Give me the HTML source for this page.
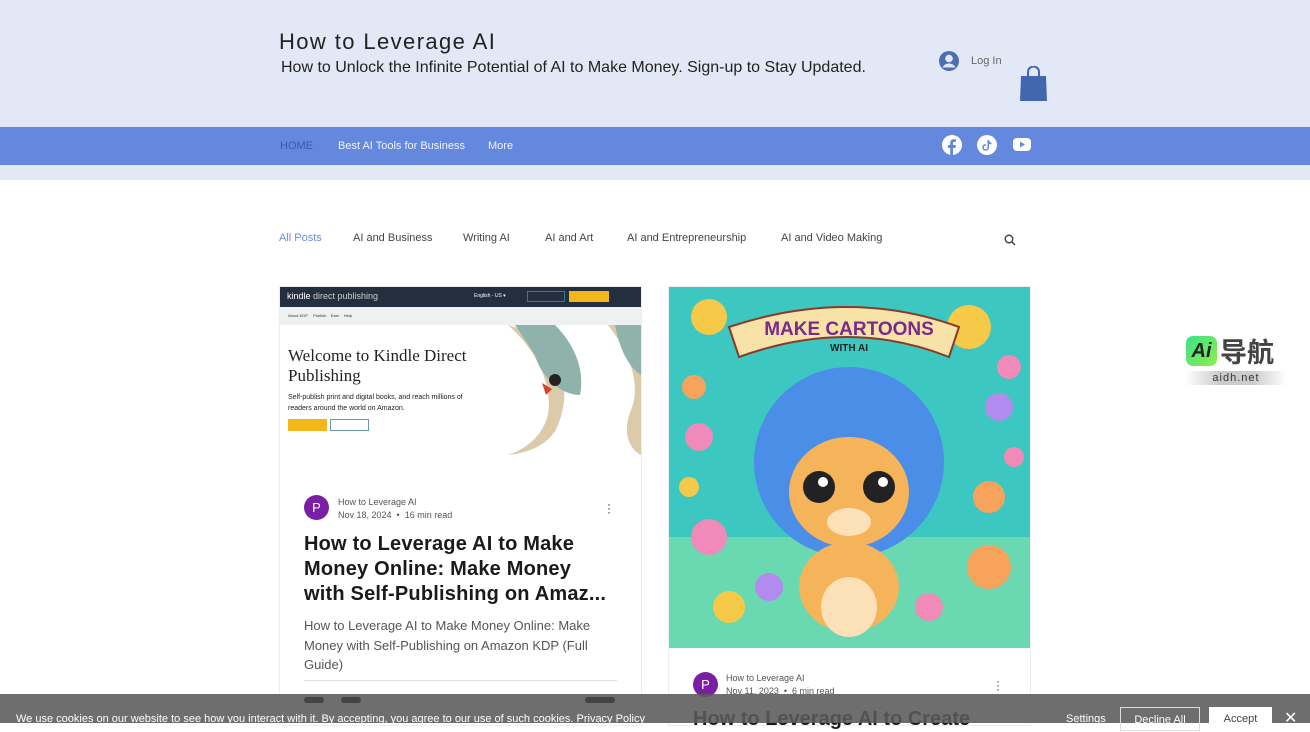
<!DOCTYPE html>
<html><head><meta charset="utf-8"><style>
*{margin:0;padding:0;box-sizing:border-box}
body{width:1310px;height:723px;overflow:hidden;background:#fff;font-family:"Liberation Sans",sans-serif;position:relative;color:#222}
.hdr{position:absolute;left:0;top:0;width:1310px;height:180px;background:#e3e8f7}
.nav{position:absolute;left:0;top:127px;width:1310px;height:38px;background:#6488de}
.abs{position:absolute;white-space:nowrap}
.card{position:absolute;border:1px solid #eee;background:#fff}
</style></head><body>
<div class="hdr"></div>
<div class="abs" style="left:279px;top:29px;font-size:22px;letter-spacing:1.4px;color:#222">How to Leverage AI</div>
<div class="abs" style="left:281px;top:59px;font-size:16px;color:#222">How to Unlock the Infinite Potential of AI to Make Money. Sign-up to Stay Updated.</div>
<svg class="abs" style="left:938px;top:50px" width="22" height="22" viewBox="0 0 22 22"><circle cx="11" cy="11" r="10" fill="#4e6db5"/><circle cx="11" cy="8.5" r="3.8" fill="#e3e8f7"/><path d="M4.5 17.5c1.5-3 4-4 6.5-4s5 1 6.5 4" fill="#e3e8f7"/></svg>
<div class="abs" style="left:971px;top:55px;font-size:11px;color:#666">Log In</div>
<svg class="abs" style="left:1019px;top:66px" width="29" height="35" viewBox="0 0 29 35"><path d="M9 10V6a5.5 5.5 0 0 1 11 0v4" fill="none" stroke="#4466b0" stroke-width="2"/><path d="M2 10h25l1 25H1z" fill="#4466b0"/></svg>
<div class="nav"></div>
<div class="abs" style="left:280px;top:140px;font-size:11px;color:#3c5aa5">HOME</div>
<div class="abs" style="left:338px;top:140px;font-size:11px;color:#f0f3fb">Best AI Tools for Business</div>
<div class="abs" style="left:488px;top:140px;font-size:11px;color:#f0f3fb">More</div>
<svg class="abs" style="left:942px;top:135px" width="20" height="20" viewBox="0 0 20 20"><circle cx="10" cy="10" r="10" fill="#fff"/><path d="M11 20v-7h2.5l.4-3H11V8.3c0-.8.3-1.4 1.4-1.4H14V4.3c-.3 0-1.2-.1-2.2-.1-2.2 0-3.6 1.3-3.6 3.7V10H6v3h2.2v7z" fill="#6488de"/></svg>
<svg class="abs" style="left:977px;top:135px" width="20" height="20" viewBox="0 0 20 20"><circle cx="10" cy="10" r="10" fill="#fff"/><path d="M10.5 5v7.5a1.8 1.8 0 1 1-1.8-1.8V9a3.4 3.4 0 1 0 3.4 3.4V8.6a4 4 0 0 0 2.4.8V7.8A2.5 2.5 0 0 1 12.2 5z" fill="#6488de"/></svg>
<svg class="abs" style="left:1013px;top:137px" width="18" height="15" viewBox="0 0 18 15"><rect x="0" y="1" width="18" height="13" rx="4" fill="#fff"/><path d="M7 4.5v6l5-3z" fill="#6488de"/></svg>

<div class="abs" style="left:279px;top:232px;font-size:11px;color:#6a8ed8">All Posts</div>
<div class="abs" style="left:353px;top:232px;font-size:11px;color:#444">AI and Business</div>
<div class="abs" style="left:463px;top:232px;font-size:11px;color:#444">Writing AI</div>
<div class="abs" style="left:545px;top:232px;font-size:11px;color:#444">AI and Art</div>
<div class="abs" style="left:627px;top:232px;font-size:11px;color:#444">AI and Entrepreneurship</div>
<div class="abs" style="left:781px;top:232px;font-size:11px;color:#444">AI and Video Making</div>
<svg class="abs" style="left:1004px;top:234px" width="12" height="12" viewBox="0 0 12 12"><circle cx="5" cy="5" r="3.8" fill="none" stroke="#333" stroke-width="1.3"/><path d="M8 8l3 3" stroke="#333" stroke-width="1.3"/></svg>

<!-- card 1 -->
<div class="card" style="left:279px;top:286px;width:363px;height:440px"></div>
<div class="abs" style="left:280px;top:287px;width:361px;height:20px;background:#232f3e"></div>
<div class="abs" style="left:287px;top:291px;font-size:9px;color:#fff">kindle <span style="color:#ccc">direct publishing</span></div>
<div class="abs" style="left:474px;top:293px;font-size:5px;color:#fff">English - US ▾</div>
<div class="abs" style="left:527px;top:291px;width:38px;height:11px;border:1px solid #3a7a8a"></div>
<div class="abs" style="left:569px;top:291px;width:40px;height:11px;background:#f5b61b"></div>
<div class="abs" style="left:280px;top:307px;width:361px;height:18px;background:#eef0f2"></div>
<div class="abs" style="left:288px;top:313px;font-size:4px;color:#333">About KDP &nbsp;&nbsp;&nbsp; Publish &nbsp;&nbsp; Earn &nbsp;&nbsp; Help</div>
<div class="abs" style="left:288px;top:346px;font-family:'Liberation Serif',serif;font-size:17px;line-height:20px;color:#222">Welcome to Kindle Direct<br>Publishing</div>
<div class="abs" style="left:288px;top:392px;font-size:7px;line-height:11px;color:#222">Self-publish print and digital books, and reach millions of<br>readers around the world on Amazon.</div>
<div class="abs" style="left:288px;top:419px;width:39px;height:12px;background:#f5b61b"></div>
<div class="abs" style="left:330px;top:419px;width:39px;height:12px;border:1px solid #6a9aa8"></div>
<svg class="abs" style="left:500px;top:325px" width="141" height="130" viewBox="0 0 141 130"><path d="M8 0c40 10 70 50 50 100-8 20-30 28-50 30 30-10 45-35 40-60C45 40 25 15 8 0z" fill="#dccbaa"/><path d="M15 0h40c20 20 30 45 25 70-20 0-40-20-45-40z" fill="#8fb3aa"/><path d="M108 0h33v130c-10-5-20-20-10-45 10-25 0-55-23-85z" fill="#dccbaa"/><path d="M115 0h26v50c-15-10-22-30-26-50z" fill="#8fb3aa"/><circle cx="55" cy="55" r="6" fill="#222"/><path d="M42 58l10 6-6 6z" fill="#d4442a"/></svg>
<div class="abs" style="left:304px;top:495px;width:25px;height:25px;border-radius:50%;background:#7a1fa2;color:#fff;font-size:13px;text-align:center;line-height:25px">P</div>
<div class="abs" style="left:338px;top:497px;font-size:9px;color:#555">How to Leverage AI</div>
<div class="abs" style="left:338px;top:510px;font-size:9px;color:#555">Nov 18, 2024 &nbsp;•&nbsp; 16 min read</div>
<div class="abs" style="left:607px;top:502px;font-size:12px;line-height:4px;color:#333">·<br>·<br>·</div>
<div class="abs" style="left:304px;top:532px;font-size:20px;line-height:25px;font-weight:bold;color:#1a1a1a;letter-spacing:.2px">How to Leverage AI to Make<br>Money Online: Make Money<br>with Self-Publishing on Amaz...</div>
<div class="abs" style="left:304px;top:616px;font-size:13px;line-height:19.5px;color:#555">How to Leverage AI to Make Money Online: Make<br>Money with Self-Publishing on Amazon KDP (Full<br>Guide)</div>
<div class="abs" style="left:304px;top:680px;width:313px;height:1px;background:#ddd"></div>

<!-- card 2 -->
<div class="card" style="left:668px;top:286px;width:363px;height:440px"></div>
<svg class="abs" style="left:669px;top:287px" width="361" height="361" viewBox="0 0 361 361">
<rect width="361" height="361" fill="#3cc7c0"/>
<rect y="250" width="361" height="111" fill="#6ad8b0"/>
<circle cx="40" cy="30" r="18" fill="#f7c948"/><circle cx="300" cy="40" r="22" fill="#f7c948"/>
<circle cx="25" cy="100" r="12" fill="#f7a35c"/><circle cx="340" cy="80" r="12" fill="#f08ab8"/>
<circle cx="30" cy="150" r="14" fill="#f08ab8"/><circle cx="330" cy="120" r="14" fill="#b38af0"/>
<circle cx="320" cy="210" r="16" fill="#f7a35c"/><circle cx="40" cy="250" r="18" fill="#f08ab8"/>
<circle cx="320" cy="280" r="22" fill="#f7a35c"/><circle cx="60" cy="320" r="16" fill="#f7c948"/>
<circle cx="100" cy="300" r="14" fill="#b38af0"/><circle cx="260" cy="320" r="14" fill="#f08ab8"/>
<circle cx="20" cy="200" r="10" fill="#f7c948"/><circle cx="345" cy="170" r="10" fill="#f08ab8"/>
<path d="M60 40 Q180 0 290 40 L280 70 Q180 30 70 70z" fill="#f7e2a8" stroke="#8a3a2a" stroke-width="2"/>
<text x="180" y="48" font-family="Liberation Sans" font-weight="bold" font-size="19" fill="#7a2a8a" text-anchor="middle">MAKE CARTOONS</text>
<text x="180" y="64" font-family="Liberation Sans" font-weight="bold" font-size="10" fill="#222" text-anchor="middle">WITH AI</text>
<ellipse cx="180" cy="175" rx="95" ry="95" fill="#4a8ee8"/>
<ellipse cx="180" cy="205" rx="60" ry="55" fill="#f5b45a"/>
<circle cx="150" cy="200" r="16" fill="#222"/><circle cx="210" cy="200" r="16" fill="#222"/>
<circle cx="154" cy="195" r="5" fill="#fff"/><circle cx="214" cy="195" r="5" fill="#fff"/>
<ellipse cx="180" cy="235" rx="22" ry="14" fill="#fbe0b8"/>
<ellipse cx="180" cy="300" rx="50" ry="45" fill="#f5b45a"/>
<ellipse cx="180" cy="320" rx="28" ry="30" fill="#fbe0b8"/>
</svg>
<div class="abs" style="left:693px;top:672px;width:25px;height:25px;border-radius:50%;background:#7a1fa2;color:#fff;font-size:13px;text-align:center;line-height:25px">P</div>
<div class="abs" style="left:726px;top:673px;font-size:9px;color:#555">How to Leverage AI</div>
<div class="abs" style="left:726px;top:686px;font-size:9px;color:#555">Nov 11, 2023 &nbsp;•&nbsp; 6 min read</div>
<div class="abs" style="left:996px;top:679px;font-size:12px;line-height:4px;color:#333">·<br>·<br>·</div>
<div class="abs" style="left:693px;top:708px;font-size:20px;font-weight:bold;color:#1a1a1a">How to Leverage AI to Create</div>

<!-- aidh logo -->
<div class="abs" style="left:1186px;top:336px;width:31px;height:30px;border-radius:7px;background:linear-gradient(135deg,#3de08a,#8af04a);font-size:20px;font-style:italic;font-weight:bold;color:#222;text-align:center;line-height:30px">Ai</div>
<div class="abs" style="left:1220px;top:333px;font-family:'Noto Sans CJK SC',sans-serif;font-size:27px;line-height:36px;font-weight:bold;color:#444">导航</div>
<div class="abs" style="left:1186px;top:371px;width:100px;height:14px;background:linear-gradient(90deg,#fff,#ccc,#ccc,#fff);font-size:11px;color:#333;text-align:center;line-height:14px;letter-spacing:1px">aidh.net</div>

<!-- cookie bar -->
<div class="abs" style="left:0;top:694px;width:1310px;height:29px;background:rgba(90,90,90,.88)"></div>
<div class="abs" style="left:304px;top:697px;width:20px;height:6px;border-radius:3px;background:#444"></div>
<div class="abs" style="left:341px;top:697px;width:20px;height:6px;border-radius:3px;background:#444"></div>
<div class="abs" style="left:585px;top:697px;width:30px;height:6px;border-radius:3px;background:#444"></div>
<div class="abs" style="left:16px;top:713px;font-size:11px;color:#fff">We use cookies on our website to see how you interact with it. By accepting, you agree to our use of such cookies. <span style="text-decoration:underline">Privacy Policy</span></div>
<div class="abs" style="left:1066px;top:713px;font-size:11px;color:#fff">Settings</div>
<div class="abs" style="left:1120px;top:707px;width:80px;height:24px;border:1px solid #ddd;color:#fff;font-size:11px;text-align:center;line-height:24px">Decline All</div>
<div class="abs" style="left:1209px;top:707px;width:63px;height:24px;background:#fff;color:#444;font-size:11px;text-align:center;line-height:24px">Accept</div>
<div class="abs" style="left:1284px;top:708px;font-size:16px;color:#fff">✕</div>
</body></html>
